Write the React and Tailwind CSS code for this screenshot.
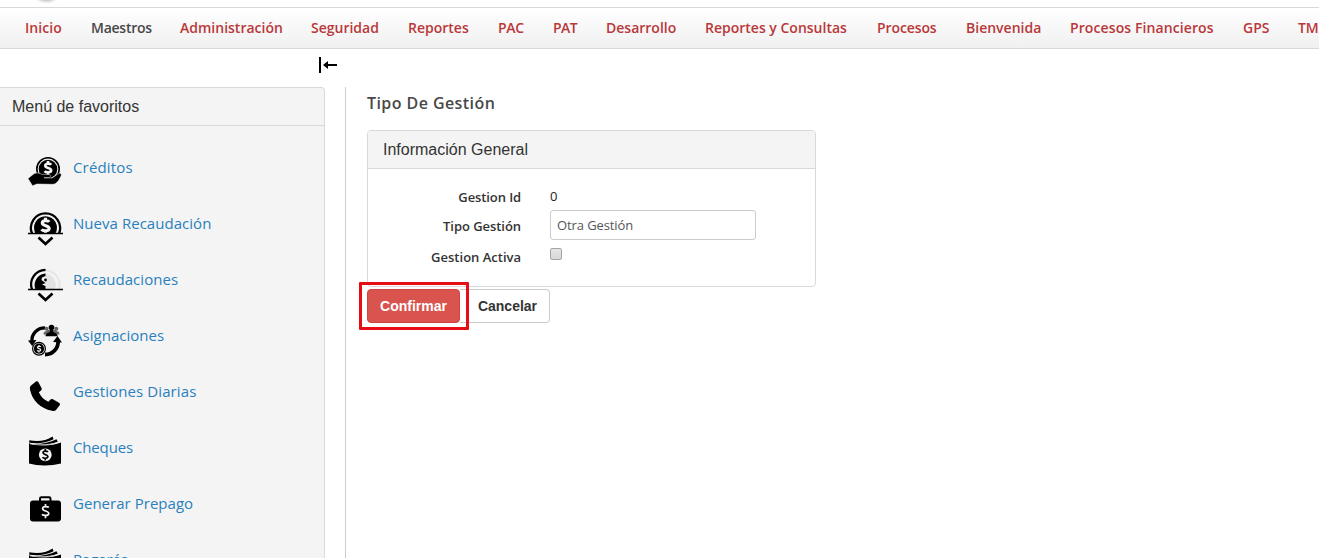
const trebuchet = "font-['Trebuchet_MS','Open_Sans',sans-serif]";

const nav = [
  { label: 'Inicio', cls: 'w-[66px] tracking-[0.05px]' },
  { label: 'Maestros', cls: 'w-[89px] tracking-[-0.25px]', active: true },
  { label: 'Administración', cls: 'w-[131px] tracking-[0px]' },
  { label: 'Seguridad', cls: 'w-[97px] tracking-[0px]' },
  { label: 'Reportes', cls: 'w-[90px] tracking-[0px]' },
  { label: 'PAC', cls: 'w-[55px] tracking-[-0.3px]' },
  { label: 'PAT', cls: 'w-[53px] tracking-[-0.5px]' },
  { label: 'Desarrollo', cls: 'w-[99px] tracking-[0px]' },
  { label: 'Reportes y Consultas', cls: 'w-[172px] tracking-[0px]' },
  { label: 'Procesos', cls: 'w-[89px] tracking-[-0.1px]' },
  { label: 'Bienvenida', cls: 'w-[104px] tracking-[0px]' },
  { label: 'Procesos Financieros', cls: 'w-[173px] tracking-[0.1px]' },
  { label: 'GPS', cls: 'w-[55px] tracking-[0px]' },
  { label: 'TMC', cls: 'w-[60px] tracking-[-0.2px]' },
];

function Dollar({ x, y, s = 1, color = '#f4f4f4', w = 2.2 }) {
  return (
    <g transform={`translate(${x} ${y}) scale(${s})`} fill="none" stroke={color} strokeWidth={w}>
      <path d="M3.5-3.6C2.5-5-3-5.4-3-2.5C-3 .4 3.4-.5 3.4 2.5C3.4 5.4-2.6 5-3.7 3.4M0-7.5v2.8M0 4.6v2.9" />
    </g>
  );
}

function CreditIcon() {
  return (
    <>
      <circle cx="20" cy="13" r="11.2" fill="none" stroke="#000" strokeWidth="1.6" />
      <circle cx="20" cy="13" r="9.3" />
      <Dollar x={20} y={12} s={0.92} w={2.9} />
      <path d="M0 22.5L5 18.5C8 16.2 11 17 14 18.3L21 18.6C23.4 18.8 23.4 21 21 21.5L16 21.8L24 22L30.5 17.7C32.5 16.5 34 18 33 20C31 24.5 28.8 27.7 25 28.3L9 28L4.5 29.8Z" stroke="#f4f4f4" strokeWidth=".5" />
    </>
  );
}

function CollectIcon({ half }) {
  return (
    <>
      {half && (
        <g>
          <path d="M17 2.5A14.5 14.5 0 0 1 31 21.5" fill="none" stroke="#e6e6e6" strokeWidth="2" />
          <path d="M17 5.5A11.5 11.5 0 0 1 27 21.5H17Z" fill="#e4e4e4" />
        </g>
      )}
      <path d={half ? 'M17.5 1.8A14.7 14.7 0 0 0 4 21.5' : 'M4 21.5A14.6 14.6 0 1 1 31 21.5'} fill="none" stroke="#000" strokeWidth="2.3" />
      <path d={half ? 'M17.5 5.5A11.5 11.5 0 0 0 7.5 21.5H17.5V18L14 16.5L17.5 15L13.5 12L14 9.5L17.5 8Z' : 'M7.5 21.5A11.5 11.5 0 1 1 27.5 21.5Z'} />
      {!half && <Dollar x={17.5} y={13.8} s={1.08} w={2.9} />}
      {half && <circle cx="17.5" cy="12" r="1.4" />}
      <path d="M0 21.5H35" stroke="#000" strokeWidth="1.6" />
      <path d="M10.5 25.5L17.5 32L24.5 25.5" fill="none" stroke="#000" strokeWidth="2.7" />
    </>
  );
}

function AssignIcon() {
  return (
    <>
      <path d="M17 3.9C9 3.9 3.5 10 4 17" fill="none" stroke="#000" strokeWidth="3.4" />
      <path d="M0 16.5L8.5 16L4.2 22Z" />
      <path d="M17 30.5C25 30.5 31 24 30 16" fill="none" stroke="#000" strokeWidth="3.8" />
      <path d="M25 18L29.5 12L34 18.5Z" />
      <circle cx="11" cy="24.7" r="6.4" fill="#f4f4f4" stroke="#000" strokeWidth="1.2" />
      <circle cx="11" cy="24.7" r="5.1" />
      <Dollar x={11} y={24.7} s={0.5} w={2.5} />
      <g fill="#666">
        <circle cx="18.5" cy="4.8" r="2" /><circle cx="28.3" cy="4.8" r="2" />
        <path d="M15.5 10.5C15.5 6.4 19 8 19 6H28C28 8 31.5 6.4 31.5 10.5Z" />
      </g>
      <circle cx="23.5" cy="3.6" r="2.8" />
      <path d="M17.5 12.3C17.5 8.6 21.7 9.3 22 7.3V4H25V7.3C25.3 9.3 29.6 8.6 29.6 12.3Z" />
    </>
  );
}

function PhoneIcon() {
  return <path d="M3 5.5L8 1.4C8.9.9 9.8 1.2 10.3 2L13.5 8C14 9 13.7 9.8 13 10.4L10.8 12.3C12.8 16.8 16 19.8 20.3 21.8L22.5 19.5C23.1 18.8 24 18.7 24.9 19.2L31 22.8C32 23.4 32.2 24.3 31.7 25.2L28 30C27.2 31 25.8 31.2 24 30.8C12.5 28.5 4.2 20.5 2 9.5C1.7 7.8 2 6.5 3 5.5Z" />;
}

function MoneyIcon() {
  return (
    <>
      <path d="M1.3 4.2C9 5.6 18 5.2 24.5 .5L25.6 3.2C18 7.2 9 7.8 1.3 6.7Z" />
      <path d="M5 8C14 8.2 22 6.5 28.5 3.2L29.8 5.8C25 8 17 10 8 9.5Z" />
      <path d="M1 7.2C10 10.5 24 10 33 6.5V27.5C23 30 10 30 1 27.5Z" />
      <path d="M2 7.8C12 9.6 24 9 32.8 5.2" fill="none" stroke="#f4f4f4" strokeWidth=".8" />
      <circle cx="17.3" cy="18.8" r="6.4" fill="#f4f4f4" />
      <Dollar x={17.3} y={18.7} s={0.76} color="#000" w={2.2} />
    </>
  );
}

function CaseIcon() {
  return (
    <>
      <path d="M12 10V6.7C12 5.8 12.5 5.3 13.4 5.3H21C22 5.3 22.5 5.8 22.5 6.7V10" fill="none" stroke="#000" strokeWidth="2" />
      <rect x="2" y="8.5" width="31" height="21" rx="3" />
      <Dollar x={17.5} y={19} s={0.95} w={1.8} />
    </>
  );
}

const favorites = [
  { label: 'Créditos', icon: <CreditIcon />, cls: 'tracking-[0.15px]' },
  { label: 'Nueva Recaudación', icon: <CollectIcon />, cls: 'tracking-[0.04px]' },
  { label: 'Recaudaciones', icon: <CollectIcon half />, cls: 'tracking-[0.03px]' },
  { label: 'Asignaciones', icon: <AssignIcon />, cls: 'tracking-[0.03px]' },
  { label: 'Gestiones Diarias', icon: <PhoneIcon />, cls: 'tracking-[0.1px]' },
  { label: 'Cheques', icon: <MoneyIcon />, cls: 'tracking-[-0.15px]' },
  { label: 'Generar Prepago', icon: <CaseIcon />, cls: 'tracking-[0.03px]' },
  { label: 'Pagarés', icon: <MoneyIcon />, cls: 'tracking-[-0.1px]' },
];

function TopNav() {
  return (
    <nav className={`flex h-[42px] shrink-0 items-center overflow-hidden border-y border-[#d8d8d8] bg-linear-to-b from-white to-[#f0f0f0] pb-[2px] pl-[25px] text-[14px] font-semibold ${trebuchet}`}>
      {nav.map((n) => (
        <a key={n.label} className={`shrink-0 whitespace-nowrap ${n.cls} ${n.active ? 'text-[#484848]' : 'text-[#b9383a]'}`}>{n.label}</a>
      ))}
    </nav>
  );
}

function Sidebar() {
  return (
    <aside className="flex w-[325px] shrink-0 flex-col rounded-tr-[4px] border-t border-r border-[#d9d9d9] bg-[#f4f4f4]">
      <h2 className="h-[38px] shrink-0 border-b border-[#d9d9d9] pl-[12px] text-[16px] leading-[37px] text-[#333]">Menú de favoritos</h2>
      <ul className="pt-[28px] pl-[28px]">
        {favorites.map((f) => (
          <li key={f.label} className="flex h-[56px] items-start gap-[10px]">
            <svg className="mt-[2px] h-[34px] w-[35px] shrink-0" viewBox="0 0 35 34">{f.icon}</svg>
            <a className={`text-[15px] leading-[26px] whitespace-nowrap text-[#2980bd] ${trebuchet} ${f.cls}`}>{f.label}</a>
          </li>
        ))}
      </ul>
    </aside>
  );
}

function Content() {
  return (
    <main className="ml-[20px] flex-1 border-l border-[#ccc] pl-[21px]">
      <h1 className={`h-[43px] pt-[5px] text-[16px] leading-[22px] font-semibold tracking-[0.43px] text-[#484848] ${trebuchet}`}>Tipo De Gestión</h1>
      <section className="h-[157px] w-[449px] rounded-[4px] border border-[#d9d9d9]">
        <h2 className="h-[38px] rounded-t-[3px] border-b border-[#d9d9d9] bg-[#f4f4f4] pl-[15px] text-[16px] leading-[37px] text-[#333]">Información General</h2>
        <div className={`grid grid-cols-[153px_206px] grid-rows-[24px_34px_28px] gap-x-[29px] pt-[17px] text-[13px] ${trebuchet}`}>
          <label className="text-right leading-[23px] font-semibold tracking-[-0.1px] text-[#333]">Gestion Id</label>
          <span className="leading-[20px] text-[#222]">0</span>
          <label className="text-right leading-[33px] font-semibold tracking-[-0.05px] text-[#333]">Tipo Gestión</label>
          <input className="h-[30px] w-[206px] rounded-[3px] border border-[#ccc] px-[6px] text-[13px] tracking-[-0.1px] text-[#555]" defaultValue="Otra Gestión" />
          <label className="text-right leading-[26px] font-semibold text-[#333]">Gestion Activa</label>
          <span className="mt-[4px] size-[12px] rounded-[2px] border border-[#a5a5a5] bg-linear-to-b from-[#e5e5e5] to-[#d8d8d8]" />
        </div>
      </section>
      <div className="relative mt-[2px] flex h-[34px] text-[14px] font-bold">
        <button className="w-[93px] rounded-[4px] border border-[#d0433f] bg-[#d9534f] text-white">Confirmar</button>
        <button className="w-[90px] rounded-r-[4px] border border-l-0 border-[#ccc] bg-white pl-[6px] text-[#333]">Cancelar</button>
        <div className="absolute -top-[7px] -left-[8px] h-[48px] w-[110px] rounded-[1px] border-[3px] border-[#e60d14]" />
      </div>
    </main>
  );
}

export default function App() {
  return (
    <div className="flex h-[558px] w-[1319px] flex-col overflow-hidden bg-white font-['Liberation_Sans',Arial,sans-serif]">
      <div className="h-[7px] shrink-0 overflow-hidden pl-[33px]">
        <div className="-mt-[24px] h-[26px] w-[27px] rounded-full bg-[#ccc] blur-[1px]" />
      </div>
      <TopNav />
      <div className="h-[38px] shrink-0 pt-[8px] pl-[319px]">
        <svg width="19" height="16" viewBox="0 0 19 16" fill="#000">
          <path d="M0 0h2v16H0zM4 8l5-4v3h9v2H9v3z" />
        </svg>
      </div>
      <div className="flex min-h-0 flex-1">
        <Sidebar />
        <Content />
      </div>
    </div>
  );
}
